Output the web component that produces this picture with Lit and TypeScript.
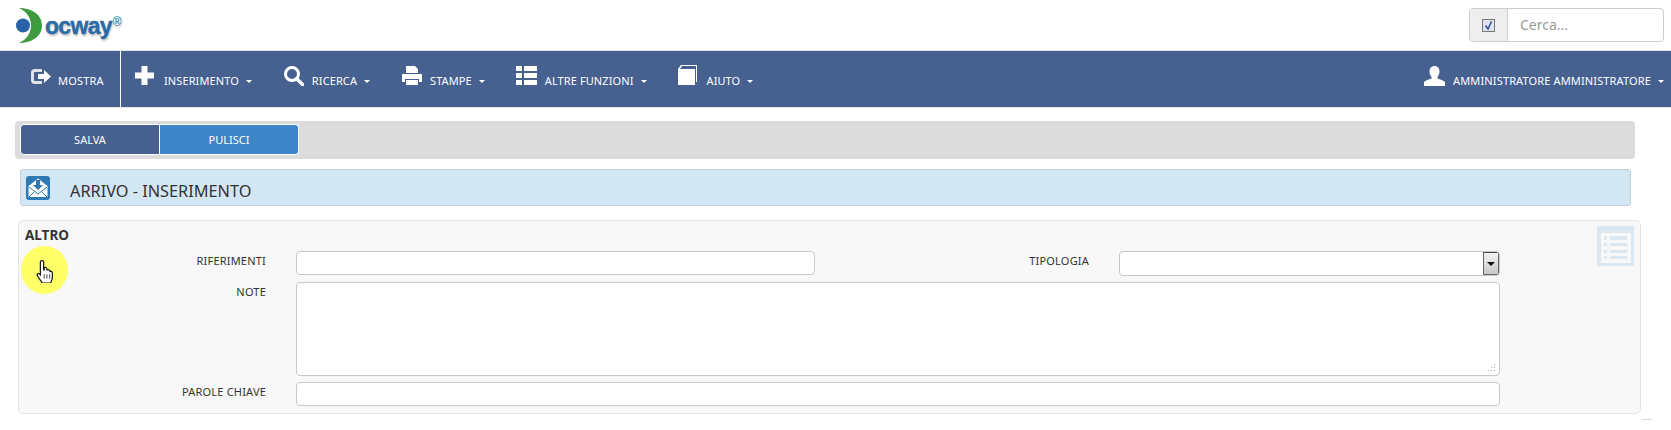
import { LitElement, html, css, svg } from "lit";
import { customElement } from "lit/decorators.js";

const caret = html`<span class="caret"></span>`;

const icons = {
  mostra: svg`<path d="M13 3H5.500C3.500 3 2 4.500 2 6.500v8C2 16.500 3.500 18 5.500 18H13v-3H6c-.6 0-1-.4-1-1V7c0-.6.4-1 1-1h7z" fill="#dfe3ea"/><path d="M9 8h6V4l7 6.500-7 6.500v-4H9z" fill="#fff"/>`,
  plus: svg`<path d="M6.500 1h6v6.500H19v6h-6.500V20h-6v-6.500H0v-6h6.500z" fill="#fff"/>`,
  search: svg`<circle cx="9" cy="9" r="6.500" fill="none" stroke="#fff" stroke-width="3"/><path d="M13.500 13.500 20 20" stroke="#fff" stroke-width="3.500" stroke-linecap="round"/>`,
  print: svg`<path d="M5 1h9l3 3v4H5z M1 9h20v8h-3v-3H4v3H1z M5 15h12v5H5z" fill="#fff"/>`,
  list: svg`<path d="M0 1h6v5H0zM8 1h13v5H8zM0 8h6v5H0zM8 8h13v5H8zM0 15h6v5H0zM8 15h13v5H8z" fill="#fff"/>`,
  book: svg`<path d="M0 4 3 0h16v17h-1V1H4L2 4h15v16H0z" fill="#fff"/>`,
  user: svg`<path d="M10.500 0c3 0 5 2.300 5 5.500 0 2.200-.8 4-2 5.200v1.800c2.500 1 6.300 2 7.500 3.500V20H0v-4c1.200-1.500 5-2.500 7.500-3.500v-1.800c-1.200-1.200-2-3-2-5.200 0-3.200 2-5.500 5-5.500z" fill="#fff"/>`,
};

const menu: [keyof typeof icons, string][] = [
  ["plus", "INSERIMENTO"],
  ["search", "RICERCA"],
  ["print", "STAMPE"],
  ["list", "ALTRE FUNZIONI"],
  ["book", "AIUTO"],
];

@customElement("app-root")
export class AppRoot extends LitElement {
  static styles = css`
    :host {
      display: block;
      font-family: "Noto Sans", "DejaVu Sans", sans-serif;
      font-size: 11px;
      color: #333;
      background: #fff;
      height: 430px;
      overflow: hidden;
      position: relative;
    }
    .top {
      height: 50px;
      display: flex;
      justify-content: space-between;
      align-items: flex-start;
      border-bottom: 1px solid #e2e2e2;
      padding-right: 7px;
    }
    .logo {
      width: 130px;
      height: 50px;
      margin-left: 15px;
      display: flex;
    }
    .logo svg {
      width: 32px;
      height: 38px;
      margin-top: 7px;
      flex: none;
    }
    .logo-text {
      font-family: "Liberation Sans", sans-serif;
      font-weight: 700;
      font-size: 23px;
      line-height: 24px;
      letter-spacing: -0.7px;
      color: #2a6aa5;
      margin: 14px 0 0 -2px;
      text-shadow: 1px 2px 2px rgba(0, 0, 0, 0.25);
      -webkit-text-stroke: 0.4px #2a6aa5;
    }
    .logo-text sup {
      font-size: 12px;
      line-height: 0;
      font-weight: 400;
      vertical-align: 8px;
      letter-spacing: 0;
      -webkit-text-stroke: 0;
      margin-left: 1px;
    }
    .search {
      margin-top: 8px;
      width: 195px;
      height: 34px;
      box-sizing: border-box;
      border: 1px solid #ccc;
      border-radius: 4px;
      display: flex;
      overflow: hidden;
    }
    .addon {
      width: 37px;
      background: #eee;
      border-right: 1px solid #ccc;
      display: flex;
      align-items: center;
      justify-content: center;
      flex: none;
    }
    .addon svg {
      width: 13px;
      height: 13px;
    }
    .search .ph {
      font-size: 14px;
      color: #999;
      padding-left: 12px;
      line-height: 31px;
    }
    nav {
      height: 56px;
      background: #466090;
      display: flex;
      align-items: stretch;
      color: #fff;
      border-bottom: 1px solid #e6e6e6;
    }
    .item {
      display: flex;
      align-items: center;
      font-size: 11px;
      color: #fff;
      white-space: nowrap;
      padding-top: 3px;
      box-sizing: border-box;
    }
    .item svg {
      flex: none;
      margin-right: 8px;
      position: relative;
      top: -5px;
    }
    .mostra {
      width: 121px;
      padding-left: 29px;
      border-right: 1px solid #fff;
      flex: none;
      letter-spacing: 0.2px;
    }
    .mostra svg {
      margin-right: 7px;
    }
    .item.m {
      margin-right: 31px;
      letter-spacing: 0.1px;
    }
    .menu {
      display: flex;
      padding-left: 14px;
    }
    .user {
      margin-left: auto;
      padding-right: 7px;
      letter-spacing: 0.14px;
    }
    .caret {
      display: inline-block;
      width: 0;
      height: 0;
      border-left: 3px solid transparent;
      border-right: 3px solid transparent;
      border-top: 3px solid #fff;
      margin-left: 7px;
      margin-top: 2px;
    }
    .toolbar {
      margin: 13px 36px 0 15px;
      height: 38px;
      box-sizing: border-box;
      background: #dcdcdc;
      border-radius: 4px;
      padding: 3px 5px;
      display: flex;
    }
    .btn {
      height: 31px;
      box-sizing: border-box;
      border: 1px solid #fff;
      color: #fff;
      display: flex;
      align-items: center;
      justify-content: center;
      font-size: 11px;
    }
    .salva {
      width: 140px;
      background: #466090;
      border-radius: 4px 0 0 4px;
    }
    .pulisci {
      width: 139px;
      background: #3d85c6;
      border-left: 0;
      border-radius: 0 4px 4px 0;
    }
    .title {
      margin: 10px 40px 0 20px;
      height: 37px;
      box-sizing: border-box;
      background: #d3e6f4;
      border: 1px solid #c3ced8;
      border-radius: 3px;
      display: flex;
      align-items: center;
      padding-left: 5px;
    }
    .title svg {
      width: 24px;
      height: 24px;
      flex: none;
    }
    .title span {
      margin-left: 20px;
      font-size: 16.300px;
      color: #333;
      line-height: 24px;
      padding-top: 6px;
    }
    .panel {
      margin: 14px 30px 0 18px;
      height: 194px;
      box-sizing: border-box;
      position: relative;
      background: #f8f8f8;
      border: 1px solid #e3e3e3;
      border-radius: 5px;
      padding: 6px 6px;
    }
    .panel h3 {
      margin: 0;
      font-size: 13.500px;
      font-weight: 700;
      line-height: 17px;
      color: #333;
    }
    .form {
      display: grid;
      grid-template-columns: 271px 519px 304px 381px;
      margin: 7px 0 0 0;
      row-gap: 6px;
      align-items: start;
    }
    .form label {
      text-align: right;
      padding-right: 30px;
      line-height: 20px;
      color: #333;
      font-size: 11px;
      letter-spacing: 0.2px;
    }
    .f {
      display: block;
      box-sizing: border-box;
      border: 1px solid #c8c8c8;
      border-radius: 4px;
      background: #fff;
      height: 24px;
      position: relative;
    }
    .select {
      height: 25px;
      overflow: hidden;
    }
    .select i {
      position: absolute;
      top: 0;
      right: 0;
      bottom: 0;
      width: 16px;
      box-sizing: border-box;
      border: 1px solid #666;
      border-top-color: #444;
      background: linear-gradient(#f2f2f2, #c8c8c8);
      display: flex;
      align-items: center;
      justify-content: center;
    }
    .select i::after {
      content: "";
      border-left: 4px solid transparent;
      border-right: 4px solid transparent;
      border-top: 4px solid #111;
    }
    .area {
      grid-column: 2 / span 3;
      height: 94px;
    }
    .area svg {
      position: absolute;
      right: 3px;
      bottom: 3px;
      width: 9px;
      height: 9px;
    }
    .wide {
      grid-column: 2 / span 3;
    }
    .watermark {
      position: absolute;
      top: 5px;
      right: 6px;
      width: 37px;
      height: 40px;
    }
    .spot {
      position: absolute;
      left: 2px;
      top: 25px;
      width: 47px;
      height: 48px;
      border-radius: 50%;
      background: #ffff66;
    }
    .spot svg {
      position: absolute;
      left: 15px;
      top: 13px;
      width: 18px;
      height: 24px;
    }
    .mark {
      position: absolute;
      left: 1642px;
      top: 419px;
      width: 10px;
      height: 1px;
      background: #d8d8d8;
    }
  `;

  render() {
    return html`
      <div class="top">
        <div class="logo">
          <svg viewBox="0 0 32 38">
            <circle cx="8" cy="18.500" r="7" fill="#2a63a8"/>
            <path d="M4 1C16 1 27 7 27 18.500S16 36 4 36C12 32 16 26 16 18.500S12 5 4 1z" fill="#3e9b3e"/>
          </svg>
          <div class="logo-text">ocway<sup>®</sup></div>
        </div>
        <div class="search">
          <div class="addon">
            <svg viewBox="0 0 13 13">
              <rect x=".5" y=".5" width="12" height="12" fill="#dfe3ee" stroke="#777"/>
              <path d="M3.500 6.500 6 10l3.500-7.500" fill="none" stroke="#2c4a96" stroke-width="1.500"/>
            </svg>
          </div>
          <div class="ph">Cerca...</div>
        </div>
      </div>
      <nav>
        <div class="item mostra">
          <svg width="22" height="20" viewBox="0 0 22 20">${icons.mostra}</svg>MOSTRA
        </div>
        <div class="menu">
          ${menu.map(
            ([ic, label]) => html`<div class="item m">
              <svg width="21" height="21" viewBox="0 0 21 21">${icons[ic]}</svg>${label}${caret}
            </div>`
          )}
        </div>
        <div class="item user">
          <svg width="21" height="20" viewBox="0 0 21 20">${icons.user}</svg>AMMINISTRATORE AMMINISTRATORE${caret}
        </div>
      </nav>
      <div class="toolbar">
        <div class="btn salva">SALVA</div>
        <div class="btn pulisci">PULISCI</div>
      </div>
      <div class="title">
        <svg viewBox="0 0 24 24">
          <rect width="24" height="24" rx="3" fill="#2f7ab5"/>
          <path d="M2.500 10 12 2.500l9.500 7.500v11h-19z" fill="#fff"/>
          <path d="M3 11l9 7 9-7M3 21l6-6M21 21l-6-6" fill="none" stroke="#2f7ab5" stroke-width="1"/>
          <path d="M10 4h4v5h3l-5 5-5-5h3z" fill="#2f7ab5"/>
        </svg>
        <span>ARRIVO - INSERIMENTO</span>
      </div>
      <div class="panel">
        <h3>ALTRO</h3>
        <div class="form">
          <label>RIFERIMENTI</label>
          <div class="f"></div>
          <label>TIPOLOGIA</label>
          <div class="f select"><i></i></div>
          <label>NOTE</label>
          <div class="f area">
            <svg viewBox="0 0 9 9" fill="#aaa">
              <path d="M7 1h1v1H7zM4 4h1v1H4zM7 4h1v1H7zM1 7h1v1H1zM4 7h1v1H4zM7 7h1v1H7z"/>
            </svg>
          </div>
          <label>PAROLE CHIAVE</label>
          <div class="f wide"></div>
        </div>
        <svg class="watermark" viewBox="0 0 37 40">
          <path fill="#dce8f1" fill-rule="evenodd" d="M0 0h37v40H0zM4 7v30h30V7z"/>
          <path fill="#dce8f1" d="M7 10h3v4H7zM13 10h17v4H13zM7 17h3v3H7zM13 17h17v3H13zM7 24h3v3H7zM13 24h17v3H13zM7 30h3v3H7zM13 30h17v3H13z"/>
        </svg>
        <div class="spot">
          <svg viewBox=".5 0 16.500 22">
            <path d="M6 1.500c1 0 1.500.8 1.500 1.500v7h.5V8c1.300-.8 2.300 0 2.500 1v1h.5c1-.6 2-.1 2.300 1v.500c1-.5 2.200 0 2.200 1.500v4c0 2-1 3-1.500 5H6c-.5-2-4.500-6-4.500-7.500 0-1.200 1.300-1.700 2.500-.5l.5.5V3c0-.9.600-1.500 1.500-1.500z" fill="#fff" stroke="#111" stroke-width="1.100"/>
            <path d="M8 14v4M10.500 14v4M13 14v4" stroke="#333" stroke-width=".8"/>
          </svg>
        </div>
      </div>
      <div class="mark"></div>
    `;
  }
}
